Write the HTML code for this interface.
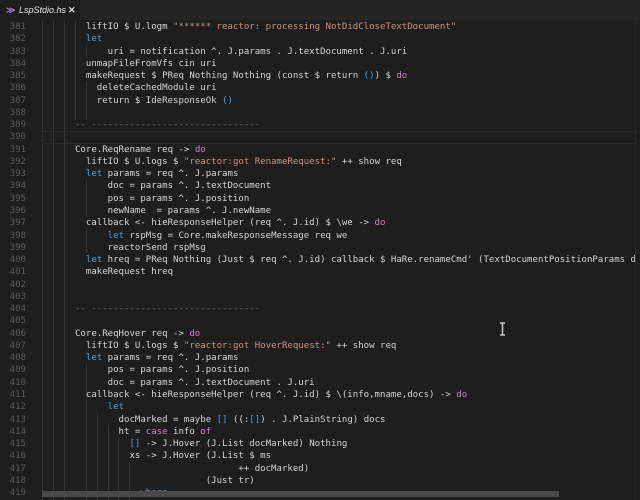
<!DOCTYPE html>
<html><head><meta charset="utf-8"><style>
html,body{margin:0;padding:0;background:#1e1e1e;width:640px;height:500px;overflow:hidden;}
#tabs{position:absolute;left:0;top:0;width:640px;height:20px;background:#252526;}
#tab{position:absolute;left:0;top:0;height:20px;width:80px;background:#1e1e1e;font:italic 9px "Liberation Sans",sans-serif;color:#e0e0e0;line-height:20px;}
#tab .ic{position:absolute;left:6px;top:0;color:#a074c4;font-style:normal;font-weight:bold;font-size:9px}
#tab .nm{position:absolute;left:19px}
#tab .x{position:absolute;left:68px;font-style:normal;font-weight:bold}
pre{margin:0;position:absolute;font-family:"DejaVu Sans Mono","Liberation Mono",monospace;font-size:9.05px;line-height:12.26px;white-space:pre;}
#nums{left:0;top:21px;width:26px;text-align:right;color:#5a5a5a;}
#code{left:42.3px;top:21px;color:#d4d4d4;}
.k{color:#569cd6}.p{color:#c586c0}.s{color:#ce9178}.c{color:#5f7f4e}
.g{position:absolute;width:1px;background:#353535;}
#cur{position:absolute;left:42px;top:131px;width:593px;height:11px;border:1px solid #2c2c2c;}
#vsep{position:absolute;left:635px;top:20px;width:1px;height:480px;background:#2a2a2a}
#mini{position:absolute;left:636px;top:20px;width:4px;height:480px;background:#1e1e1e}
#hs{position:absolute;left:42px;top:491px;width:517px;height:6px;background:#4a4a4a}
</style></head><body>
<div id="tabs"><div id="tab"><span class="ic">≫</span><span class="nm">LspStdio.hs</span><span class="x">✕</span></div></div>
<div class="g" style="left:42px;top:20px;height:480px"></div>
<div class="g" style="left:53px;top:20px;height:480px"></div>
<div class="g" style="left:64px;top:20px;height:480px"></div>
<div class="g" style="left:75px;top:20px;height:100px"></div>
<div class="g" style="left:86px;top:45px;height:12px"></div>
<div class="g" style="left:86px;top:82px;height:38px"></div>
<div class="g" style="left:86px;top:180px;height:36px"></div>
<div class="g" style="left:86px;top:229px;height:24px"></div>
<div class="g" style="left:86px;top:364px;height:136px"></div>
<div class="g" style="left:97px;top:413px;height:87px"></div>
<div class="g" style="left:108px;top:425px;height:75px"></div>
<div class="g" style="left:118px;top:438px;height:62px"></div>
<div class="g" style="left:129px;top:462px;height:38px"></div>
<div id="cur"></div>
<pre id="nums">381
382
383
384
385
386
387
388
389
390
391
392
393
394
395
396
397
398
399
400
401
402
403
404
405
406
407
408
409
410
411
412
413
414
415
416
417
418
419</pre>
<pre id="code">        liftIO $ U.logm <span class="s">"****** reactor: processing NotDidCloseTextDocument"</span>
        <span class="k">let</span>
            uri = notification ^. J.params . J.textDocument . J.uri
        unmapFileFromVfs cin uri
        makeRequest $ PReq Nothing Nothing (const $ return <span class="k">()</span>) $ <span class="p">do</span>
          deleteCachedModule uri
          return $ IdeResponseOk <span class="k">()</span>

      <span class="c">-- -------------------------------</span>

      Core.ReqRename req -&gt; <span class="p">do</span>
        liftIO $ U.logs $ <span class="s">"reactor:got RenameRequest:"</span> ++ show req
        <span class="k">let</span> params = req ^. J.params
            doc = params ^. J.textDocument
            pos = params ^. J.position
            newName  = params ^. J.newName
        callback &lt;- hieResponseHelper (req ^. J.id) $ \we -&gt; <span class="p">do</span>
            <span class="k">let</span> rspMsg = Core.makeResponseMessage req we
            reactorSend rspMsg
        <span class="k">let</span> hreq = PReq Nothing (Just $ req ^. J.id) callback $ HaRe.renameCmd' (TextDocumentPositionParams do
        makeRequest hreq


      <span class="c">-- -------------------------------</span>

      Core.ReqHover req -&gt; <span class="p">do</span>
        liftIO $ U.logs $ <span class="s">"reactor:got HoverRequest:"</span> ++ show req
        <span class="k">let</span> params = req ^. J.params
            pos = params ^. J.position
            doc = params ^. J.textDocument . J.uri
        callback &lt;- hieResponseHelper (req ^. J.id) $ \(info,mname,docs) -&gt; <span class="p">do</span>
            <span class="k">let</span>
              docMarked = maybe <span class="k">[]</span> ((:<span class="k">[]</span>) . J.PlainString) docs
              ht = <span class="p">case</span> info <span class="p">of</span>
                <span class="k">[]</span> -&gt; J.Hover (J.List docMarked) Nothing
                xs -&gt; J.Hover (J.List $ ms
                                    ++ docMarked)
                              (Just tr)
                  <span class="k">where</span></pre>
<svg style="position:absolute;left:499px;top:322px" width="7" height="14"><path d="M1 1H6M3.5 1V13M1 13H6" stroke="#c8c8c8" stroke-width="1.5" fill="none"/></svg>
<div id="vsep"></div><div id="mini"></div>
<div id="hs"></div>
</body></html>
